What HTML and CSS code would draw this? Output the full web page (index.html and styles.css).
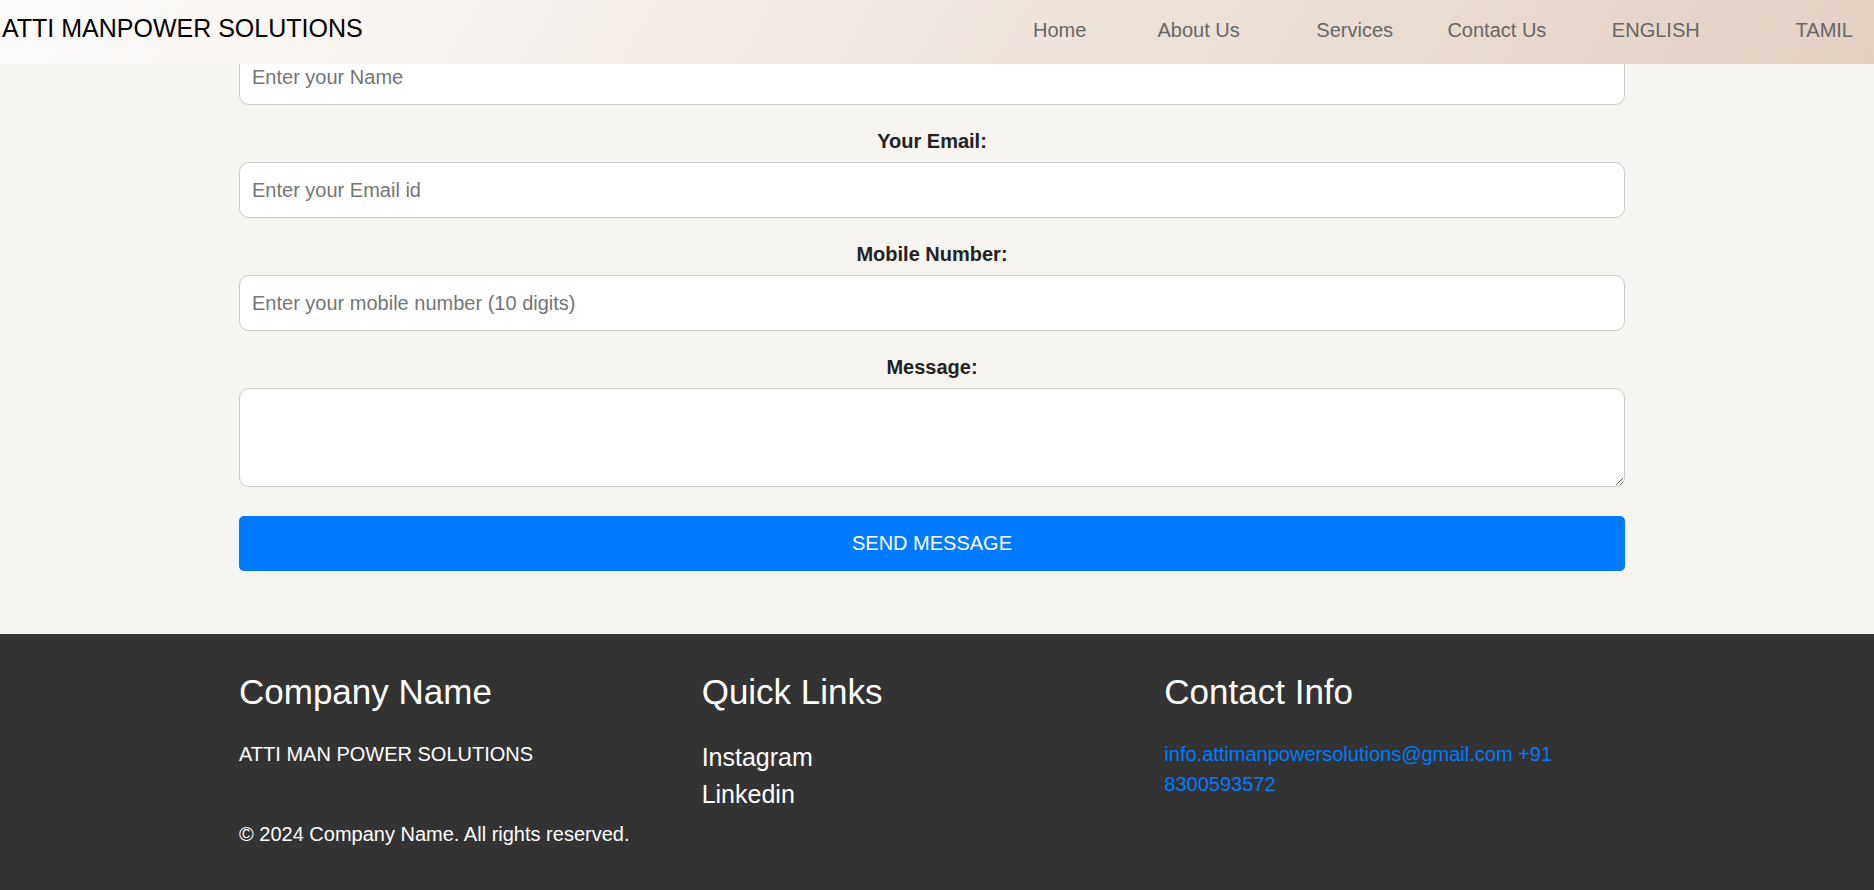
FILE: index.html
```html
<!DOCTYPE html>
<html lang="en">
<head>
<meta charset="utf-8">
<title>ATTI MANPOWER SOLUTIONS</title>
<link rel="stylesheet" href="styles.css">
</head>
<body>
<header class="site-header">
  <div class="logo">ATTI MANPOWER SOLUTIONS</div>
  <nav class="main-nav">
    <a href="#" class="nav-link">Home</a>
    <a href="#" class="nav-link">About Us</a>
    <a href="#" class="nav-link">Services</a>
    <a href="#" class="nav-link">Contact Us</a>
    <a href="#" class="nav-link">ENGLISH</a>
    <a href="#" class="nav-link">TAMIL</a>
  </nav>
</header>

<main class="contact-section">
  <form class="contact-form">
    <input class="field" type="text" placeholder="Enter your Name">
    <label class="field-label">Your Email:</label>
    <input class="field" type="email" placeholder="Enter your Email id">
    <label class="field-label">Mobile Number:</label>
    <input class="field" type="tel" placeholder="Enter your mobile number (10 digits)">
    <label class="field-label">Message:</label>
    <textarea class="field field-area"></textarea>
    <button type="button" class="send-btn">SEND MESSAGE</button>
  </form>
</main>

<footer class="site-footer">
  <div class="footer-inner">
    <div class="footer-cols">
      <div class="footer-col">
        <h3 class="footer-title">Company Name</h3>
        <p class="footer-text">ATTI MAN POWER SOLUTIONS</p>
      </div>
      <div class="footer-col">
        <h3 class="footer-title">Quick Links</h3>
        <ul class="footer-links">
          <li><a href="#" class="footer-link">Instagram</a></li>
          <li><a href="#" class="footer-link">Linkedin</a></li>
        </ul>
      </div>
      <div class="footer-col">
        <h3 class="footer-title">Contact Info</h3>
        <p class="footer-text"><a href="#" class="contact-link">info.attimanpowersolutions@gmail.com +91 8300593572</a></p>
      </div>
    </div>
    <p class="copyright">© 2024 Company Name. All rights reserved.</p>
  </div>
</footer>
</body>
</html>
```

FILE: styles.css
```css
* {
  box-sizing: border-box;
}

html, body {
  margin: 0;
  padding: 0;
}

body {
  font-family: "Liberation Sans", Arial, sans-serif;
  background: #f5f4f0;
  color: #222;
}

.site-header {
  position: fixed;
  top: 0;
  left: 0;
  right: 0;
  z-index: 10;
  height: 64px;
  display: flex;
  align-items: baseline;
  justify-content: space-between;
  padding: 14px 21px 0 2px;
  background: linear-gradient(120deg, #fdfcfb 0%, #e2d1c3 100%);
}

.logo {
  font-size: 25px;
  color: #000;
  line-height: normal;
}

.main-nav {
  display: flex;
  align-items: baseline;
}

.nav-link {
  width: 153.33px;
  text-align: right;
  font-size: 20px;
  color: #666;
  text-decoration: none;
}

.contact-section {
  padding: 49px 0 63px;
}

.contact-form {
  width: 1386px;
  margin-left: 239px;
  display: flex;
  flex-direction: column;
}

.field-label {
  display: block;
  text-align: center;
  font-weight: bold;
  font-size: 20px;
  line-height: 23px;
  color: #222;
  margin-bottom: 9px;
}

.field {
  display: block;
  width: 100%;
  height: 56px;
  margin: 0 0 25px;
  padding: 0 12px;
  font-family: "Liberation Sans", Arial, sans-serif;
  font-size: 20px;
  color: #222;
  background: #fff;
  border: 1px solid #ccc;
  border-radius: 10px;
  outline: none;
}

.field::placeholder {
  color: #757575;
}

.field-area {
  height: 99px;
  padding: 12px;
  margin-bottom: 29px;
  resize: vertical;
}

.send-btn {
  display: block;
  width: 100%;
  height: 55px;
  border: none;
  border-radius: 5px;
  background: #007bff;
  color: #fff;
  font-family: "Liberation Sans", Arial, sans-serif;
  font-size: 20px;
  cursor: pointer;
}

.site-footer {
  background: #333;
  color: #fff;
  padding: 32px 0 41px;
  line-height: 1.5;
}

.footer-inner {
  width: 1388px;
  margin-left: 239px;
}

.footer-cols {
  display: grid;
  grid-template-columns: repeat(3, 1fr);
}

.footer-title {
  font-size: 35px;
  font-weight: normal;
  margin: 0 0 20px;
  color: #fff;
}

.footer-text {
  font-size: 20px;
  margin: 0;
}

.footer-links {
  list-style: none;
  margin: 0;
  padding: 0;
}

.footer-link {
  font-size: 25px;
  color: #fff;
  text-decoration: none;
}

.contact-link {
  color: #007bff;
  text-decoration: none;
}

.copyright {
  font-size: 20px;
  margin: 5px 0 0;
}
```
